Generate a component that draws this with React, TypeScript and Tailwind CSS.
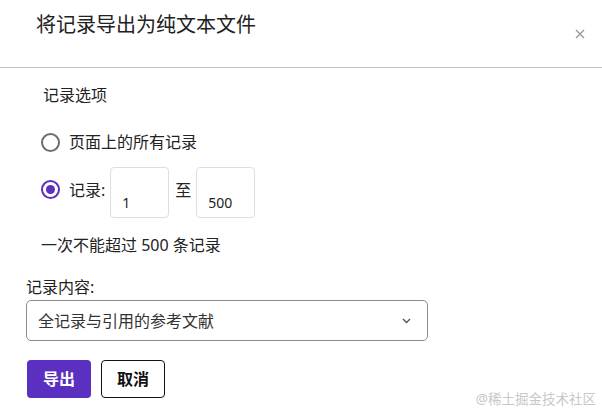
import { useState } from "react";

const font = { fontFamily: '"Noto Sans", "Noto Sans CJK SC", sans-serif' };

function Radio({ checked }: { checked: boolean }) {
  return (
    <span
      className={`flex h-[19px] w-[19px] shrink-0 items-center justify-center rounded-full border-2 ${
        checked ? "border-[#5b2fbf]" : "border-[#6e6e6e]"
      }`}
    >
      {checked && <span className="h-[9px] w-[9px] rounded-full bg-[#5b2fbf]" />}
    </span>
  );
}

function NumBox({ value }: { value: string }) {
  return (
    <div className="h-[51px] w-[59px] rounded-[4px] border border-[#dedede] bg-white pl-[11px] pt-[26px] text-[14px] leading-[18px] text-[#222]">
      {value}
    </div>
  );
}

export default function App() {
  const [mode] = useState<"all" | "range">("range");

  return (
    <div className="h-[420px] w-[602px] overflow-hidden bg-white text-[#222]" style={font}>
      {/* header */}
      <div className="flex h-[68px] items-start justify-between border-b border-[#c4c4c4] pl-[36px] pr-[17px]">
        <h1 className="pt-[12px] text-[20px] leading-[26px] font-normal">将记录导出为纯文本文件</h1>
        <svg width="10" height="10" viewBox="0 0 10 10" className="mt-[29px]">
          <path d="M1 1L9 9M9 1L1 9" stroke="#9a9a9a" strokeWidth="1.4" />
        </svg>
      </div>

      {/* body */}
      <div className="px-[26px] pt-[15px]">
        <div className="ml-[15px]">
          <div className="ml-[2px] text-[16px] leading-[24px]">记录选项</div>

          <div className="mt-[23px] flex h-[24px] items-center">
            <Radio checked={mode === "all"} />
            <span className="ml-[9px] text-[16px] leading-[24px]">页面上的所有记录</span>
          </div>

          <div className="mt-[13px] flex items-start gap-[5px]">
            <div className="mt-[13px]">
              <Radio checked={mode === "range"} />
            </div>
            <span className="ml-[4px] mt-[11px] text-[16px] leading-[24px]">记录:</span>
            <NumBox value="1" />
            <span className="ml-[1px] mt-[11px] text-[16px] leading-[24px]">至</span>
            <NumBox value="500" />
          </div>

          <div className="mt-[15px] text-[16px] leading-[24px]">一次不能超过 500 条记录</div>
        </div>

        <div className="mt-[18px] text-[16px] leading-[24px]">记录内容:</div>
        <div className="mt-[1px] flex h-[41px] w-[402px] items-center justify-between rounded-[5px] border border-[#8c8c8c] pl-[11px] pr-[16px]">
          <span className="text-[16px] leading-[24px] text-[#333]">全记录与引用的参考文献</span>
          <svg width="9" height="6" viewBox="0 0 9 6">
            <path d="M1 1L4.5 4.5L8 1" fill="none" stroke="#555" strokeWidth="1.4" />
          </svg>
        </div>

        <div className="mt-[19px] flex gap-[10px] pl-[1px]">
          <button className="h-[38px] w-[64px] rounded-[4px] bg-[#5b2fbf] text-[16px] font-bold text-white">
            导出
          </button>
          <button className="h-[38px] w-[64px] rounded-[4px] border border-[#111] bg-white text-[16px] font-bold text-[#111]">
            取消
          </button>
        </div>
      </div>

      <div className="-mt-[8px] pr-[6px] text-right text-[13.5px] leading-[18px] text-[#c8c8c8]">@稀土掘金技术社区</div>
    </div>
  );
}
